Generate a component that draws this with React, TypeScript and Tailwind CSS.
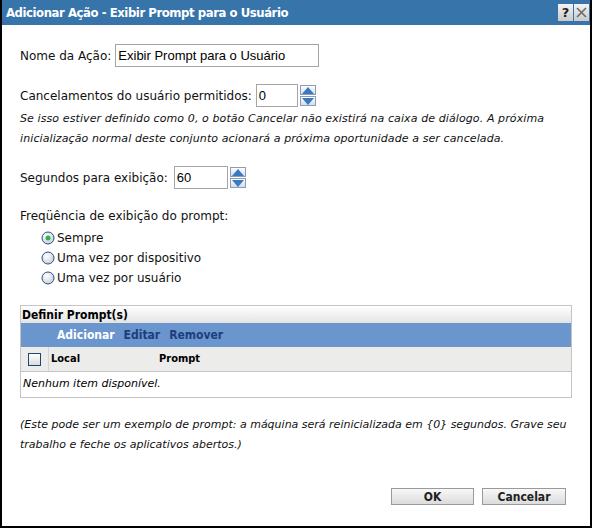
const body = "font-['DejaVu_Sans',sans-serif]";
const cond = "font-['DejaVu_Sans_Condensed','DejaVu_Sans',sans-serif]";

function Spinner() {
  return (
    <div className="ml-[2px] flex flex-col gap-[1px]">
      {["up", "down"].map((d) => (
        <div
          key={d}
          className="flex h-[10px] w-[16px] items-center justify-center border border-[#8a9db5] bg-gradient-to-b from-[#ffffff] to-[#d4dce6]"
        >
          <svg width="12" height="7" viewBox="0 0 12 7">
            {d === "up" ? (
              <polygon points="6,0 12,7 0,7" fill="#3a78c0" />
            ) : (
              <polygon points="0,0 12,0 6,7" fill="#3a78c0" />
            )}
          </svg>
        </div>
      ))}
    </div>
  );
}

function Radio({ checked, label }: { checked?: boolean; label: string }) {
  return (
    <div className="flex h-[20px] items-center">
      <svg width="14" height="14" viewBox="0 0 14 14" className="ml-[1px] mr-[2px]">
        <defs>
          <radialGradient id={"r" + label.length} cx="40%" cy="35%" r="70%">
            <stop offset="0%" stopColor="#ffffff" />
            <stop offset="100%" stopColor="#c8ced6" />
          </radialGradient>
        </defs>
        <circle cx="7" cy="7" r="6" fill={`url(#r${label.length})`} stroke="#2c4f82" strokeWidth="1" />
        {checked && <circle cx="7" cy="7" r="2.5" fill="#2fb34a" />}
      </svg>
      <span className="text-[12px] text-[#111]">{label}</span>
    </div>
  );
}

export default function App() {
  return (
    <div className={`flex h-[528px] w-[592px] flex-col border-x-2 border-b-2 border-black bg-white ${body}`}>
      <div className="flex h-[25px] shrink-0 items-center justify-between bg-[#3674aa] pl-[4px] pr-[1px]">
        <span className={`${cond} text-[13px] font-bold tracking-[-0.45px] text-white`}>
          Adicionar Ação - Exibir Prompt para o Usuário
        </span>
        <div className="flex gap-[1px]">
          <div className="flex h-[17px] w-[15px] items-center justify-center bg-gradient-to-b from-[#f4f4f4] to-[#c9c9c9] text-[13px] font-bold leading-none text-[#222]">
            ?
          </div>
          <div className="flex h-[17px] w-[15px] items-center justify-center bg-gradient-to-b from-[#f4f4f4] to-[#c9c9c9]">
            <svg width="11" height="11" viewBox="0 0 11 11">
              <path d="M1 1 L10 10 M10 1 L1 10" stroke="#6a6a6a" strokeWidth="1.6" />
            </svg>
          </div>
        </div>
      </div>

      <div className="flex flex-1 flex-col px-[18px] text-[12px] text-[#111]">
        <div className="mt-[19px] flex items-center">
          <span>Nome da Ação:</span>
          <div className="ml-[4px] flex h-[23px] w-[204px] items-center border border-[#a5a5a5] px-[2px] font-['Liberation_Sans',sans-serif] text-[13px] text-black">
            Exibir Prompt para o Usuário
          </div>
        </div>

        <div className="mt-[17px] flex items-center">
          <span>Cancelamentos do usuário permitidos:</span>
          <div className="ml-[4px] flex h-[23px] w-[42px] items-center border border-[#a5a5a5] px-[2px] font-['Liberation_Sans',sans-serif] text-[13px] text-black">
            0
          </div>
          <Spinner />
        </div>

        <p className="mt-[2px] text-[11px] italic leading-[20px] tracking-[0.1px] text-[#111]">
          Se isso estiver definido como 0, o botão Cancelar não existirá na caixa de diálogo. A próxima
          inicialização normal deste conjunto acionará a próxima oportunidade a ser cancelada.
        </p>

        <div className="mt-[17px] flex items-center">
          <span>Segundos para exibição:</span>
          <div className="ml-[6px] flex h-[23px] w-[54px] items-center border border-[#a5a5a5] px-[2px] font-['Liberation_Sans',sans-serif] text-[13px] text-black">
            60
          </div>
          <Spinner />
        </div>

        <div className="mt-[18px]">Freqüência de exibição do prompt:</div>
        <div className="ml-[20px] mt-[3px] flex flex-col">
          <Radio checked label="Sempre" />
          <Radio label="Uma vez por dispositivo" />
          <Radio label="Uma vez por usuário" />
        </div>

        <div className="mt-[17px] border border-[#c4c4c4]">
          <div className={`${cond} flex h-[17px] items-center bg-gradient-to-b from-[#ffffff] to-[#e4e4e4] px-[1px] text-[12px] font-bold text-black`}>
            Definir Prompt(s)
          </div>
          <div className={`${cond} flex h-[24px] items-center gap-[9px] bg-[#6a95cd] pl-[36px] text-[12px] font-bold`}>
            <span className="text-white">Adicionar</span>
            <span className="text-[#1d3e7e]">Editar</span>
            <span className="text-[#1d3e7e]">Remover</span>
          </div>
          <div className={`${cond} flex h-[25px] items-center border-b border-[#c4c4c4] bg-[#ececea] text-[11px] font-bold text-black`}>
            <div className="flex h-full w-[28px] items-center justify-center border-r border-[#d4d4d4]">
              <div className="h-[13px] w-[13px] border border-[#1f4577] bg-gradient-to-b from-[#ffffff] to-[#dcdcdc]" />
            </div>
            <span className="ml-[2px] w-[108px]">Local</span>
            <span>Prompt</span>
          </div>
          <div className="flex h-[25px] items-center px-[2px] text-[11px] italic text-black">
            Nenhum item disponível.
          </div>
        </div>

        <p className="mt-[17px] text-[11px] italic leading-[20px] text-[#111]">
          {"(Este pode ser um exemplo de prompt: a máquina será reinicializada em {0} segundos. Grave seu trabalho e feche os aplicativos abertos.)"}
        </p>

        <div className="mt-auto mb-[21px] flex justify-end gap-[8px] pr-[6px]">
          <button className={`${cond} h-[17px] w-[83px] border border-[#9a9a9a] bg-gradient-to-b from-[#f8f8f8] to-[#dcdcdc] text-[12px] font-bold leading-none text-[#222]`}>
            OK
          </button>
          <button className={`${cond} h-[17px] w-[84px] border border-[#9a9a9a] bg-gradient-to-b from-[#f8f8f8] to-[#dcdcdc] text-[12px] font-bold leading-none text-[#222]`}>
            Cancelar
          </button>
        </div>
      </div>
    </div>
  );
}
